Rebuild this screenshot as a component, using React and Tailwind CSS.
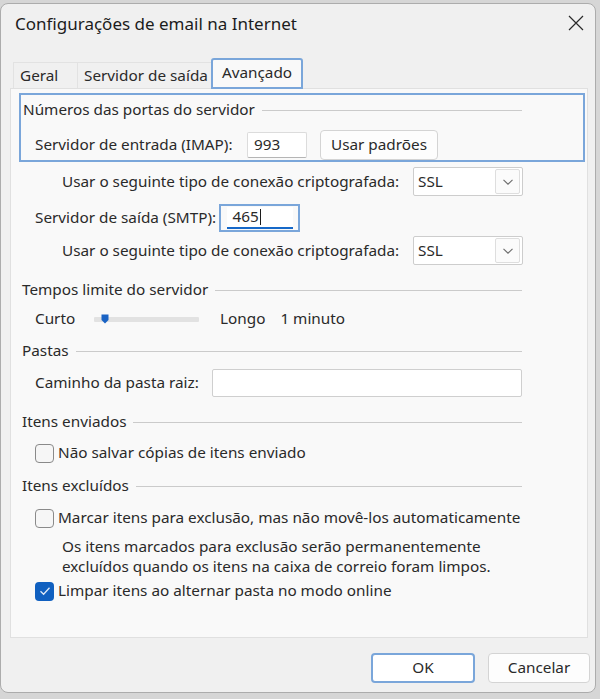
import clsx from 'clsx';

function GroupHeader({ title, className }) {
  return (
    <div className={clsx('flex items-center h-[20px] pl-[11px] w-[511px]', className)}>
      <span className="whitespace-nowrap">{title}</span>
      <div className="flex-1 h-px bg-[#cbcbcb] ml-[7px]" />
    </div>
  );
}

function Chevron() {
  return (
    <svg width="12" height="8" viewBox="0 0 12 8" fill="none">
      <path d="M1.5 1.8 L6 6.2 L10.5 1.8" stroke="#6b6b6b" strokeWidth="1.1" />
    </svg>
  );
}

function Select({ value }) {
  return (
    <div className="w-[110px] h-[29px] bg-white border border-[#cdcdcd] rounded-[2px] flex items-center pl-[4px] pr-[2px]">
      <span className="flex-1">{value}</span>
      <div className="w-[25px] h-[25px] border border-[#dedede] rounded-[2px] flex items-center justify-center bg-[#fbfbfb]">
        <Chevron />
      </div>
    </div>
  );
}

function Checkbox({ checked }) {
  if (checked) {
    return (
      <div className="w-[19px] h-[19px] rounded-[4px] bg-[#1060c0] flex items-center justify-center shrink-0">
        <svg width="12" height="10" viewBox="0 0 12 10" fill="none">
          <path d="M1.5 5.2 L4.6 8.2 L10.5 1.8" stroke="#dfe9f7" strokeWidth="1.3" />
        </svg>
      </div>
    );
  }
  return <div className="w-[19px] h-[19px] rounded-[4px] border border-[#8a8a8a] bg-[#f6f6f6] shrink-0" />;
}

export default function App() {
  return (
    <div className="w-[600px] h-[699px] bg-[#d6d6d6] pt-[3px] overflow-hidden font-['Noto_Sans',sans-serif] text-[15.3px] text-[#2a2a2a] leading-none">
      <div className="w-[596px] h-[690px] rounded-[8px] border border-[#acacac] bg-[#f0f0f0] flex flex-col">
        {/* Title bar */}
        <div className="h-[38px] flex items-center justify-between pl-[14px] pr-[11px]">
          <span className="text-[17px] text-[#1c1c1c]">Configurações de email na Internet</span>
          <svg width="16" height="16" viewBox="0 0 16 16" fill="none">
            <path d="M1 1 L15 15 M15 1 L1 15" stroke="#2a2a2a" strokeWidth="1.2" />
          </svg>
        </div>

        {/* Tabs */}
        <div className="h-[46px] flex items-end pl-[12px]">
          <div className="w-[64px] h-[26px] border-l border-t border-[#e2e2e2] flex items-center pl-[6px]">Geral</div>
          <div className="w-[134px] h-[26px] border-l border-t border-[#e2e2e2] flex items-center pl-[6px]">Servidor de saída</div>
          <div className="relative z-10 -mb-px w-[92px] h-[31px] border-2 border-[#7aa6da] rounded-t-[3px] bg-[#f9f9f9] flex items-center justify-center pb-[2px]">
            Avançado
          </div>
        </div>

        {/* Panel */}
        <div className="ml-[9px] w-[578px] h-[550px] border border-[#e0e0e0] bg-[#f9f9f9] flex flex-col">
          {/* Ports group with focus frame */}
          <div className="mt-[4px] ml-[8px] w-[566px] h-[69px] border-2 border-[#7aa6da] flex flex-col">
            <div className="mt-[5px] h-[20px] w-[501px] flex items-center pl-[2px]">
              <span className="whitespace-nowrap">Números das portas do servidor</span>
              <div className="flex-1 h-px bg-[#cbcbcb] ml-[7px]" />
            </div>
            <div className="mt-[11px] h-[28px] flex items-center pl-[14px]">
              <span className="w-[212px]">Servidor de entrada (IMAP):</span>
              <div className="w-[60px] h-[26px] bg-white border border-[#dcdcdc] border-b-[#b5b5b5] rounded-[2px] flex items-center pl-[6px]">993</div>
              <div className="ml-[13px] w-[118px] h-[30px] bg-[#fdfdfd] border border-[#d4d4d4] rounded-[4px] flex items-center justify-center">
                Usar padrões
              </div>
            </div>
          </div>

          <div className="mt-[5px] h-[29px] flex items-center pl-[51px]">
            <span className="w-[351px]">Usar o seguinte tipo de conexão criptografada:</span>
            <Select value="SSL" />
          </div>

          <div className="mt-[8px] h-[28px] flex items-center pl-[24px]">
            <span className="w-[184px]">Servidor de saída (SMTP):</span>
            <div className="w-[81px] h-[28px] border-2 border-[#7aa6da] flex items-center justify-center">
              <div className="w-[66px] h-[22px] bg-white border-b-2 border-[#1668c8] flex items-center pl-[6px]">
                <span>465</span>
                <span className="w-px h-[16px] bg-[#1c1c1c] ml-[1px]" />
              </div>
            </div>
          </div>

          <div className="mt-[4px] h-[29px] flex items-center pl-[51px]">
            <span className="w-[351px]">Usar o seguinte tipo de conexão criptografada:</span>
            <Select value="SSL" />
          </div>

          <GroupHeader title="Tempos limite do servidor" className="mt-[15px]" />

          <div className="mt-[9px] h-[20px] flex items-center pl-[24px]">
            <span className="w-[59px]">Curto</span>
            <div className="relative w-[105px] h-[5px] bg-[#e2e2e2] rounded-[1px]">
              <svg className="absolute left-[7px] -top-[3px]" width="8" height="10" viewBox="0 0 8 10">
                <path d="M0.5 0.5 H7.5 V6 L4 9.5 L0.5 6 Z" fill="#1a63c4" />
              </svg>
            </div>
            <span className="ml-[21px]">Longo</span>
            <span className="ml-[15px]">1 minuto</span>
          </div>

          <GroupHeader title="Pastas" className="mt-[12px]" />

          <div className="mt-[8px] h-[28px] flex items-center pl-[24px]">
            <span className="w-[177px]">Caminho da pasta raiz:</span>
            <div className="w-[310px] h-[28px] bg-white border border-[#cfcfcf] rounded-[2px]" />
          </div>

          <GroupHeader title="Itens enviados" className="mt-[15px]" />

          <div className="mt-[11px] h-[20px] flex items-center pl-[24px] gap-[4px]">
            <Checkbox />
            <span>Não salvar cópias de itens enviado</span>
          </div>

          <GroupHeader title="Itens excluídos" className="mt-[13px]" />

          <div className="mt-[12px] h-[20px] flex items-center pl-[24px] gap-[4px]">
            <Checkbox />
            <span>Marcar itens para exclusão, mas não movê-los automaticamente</span>
          </div>

          <div className="mt-[8px] pl-[51px] leading-[20px]">
            <p>Os itens marcados para exclusão serão permanentemente</p>
            <p>excluídos quando os itens na caixa de correio foram limpos.</p>
          </div>

          <div className="mt-[5px] h-[20px] flex items-center pl-[24px] gap-[4px]">
            <Checkbox checked />
            <span>Limpar itens ao alternar pasta no modo online</span>
          </div>
        </div>

        {/* Footer buttons */}
        <div className="mt-[15px] flex pl-[370px] gap-[13px]">
          <div className="w-[104px] h-[30px] bg-white border-2 border-[#7aa6da] rounded-[4px] flex items-center justify-center">OK</div>
          <div className="w-[102px] h-[30px] bg-[#fdfdfd] border border-[#d4d4d4] rounded-[4px] flex items-center justify-center">Cancelar</div>
        </div>
      </div>
    </div>
  );
}
